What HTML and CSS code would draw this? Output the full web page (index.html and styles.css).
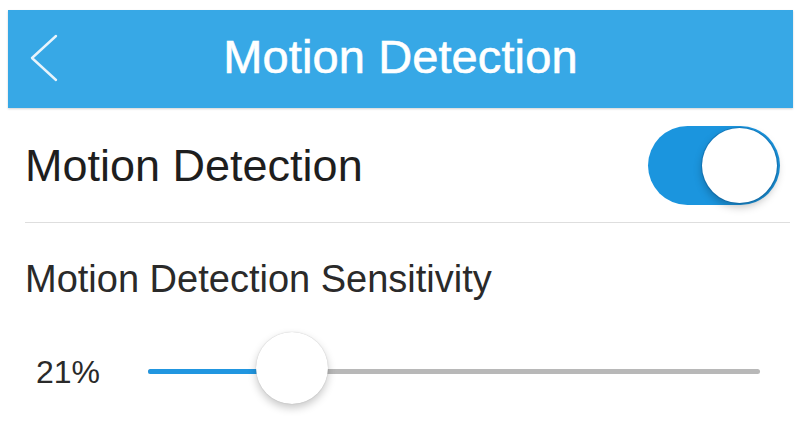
FILE: index.html
```html
<!DOCTYPE html>
<html lang="en">
<head>
  <meta charset="UTF-8" />
  <meta name="viewport" content="width=device-width, initial-scale=1.0"/>
  <title>Motion Detection</title>
  <link rel="stylesheet" href="styles.css">
</head>
<body>
  <div class="screen">
    <div class="navbar">
      <button class="back" aria-label="Back">
        <svg width="34" height="50" viewBox="0 0 34 50">
          <polyline points="30,3 6,25 30,47" fill="none" stroke="#e8f4fc" stroke-width="2.4" stroke-linecap="round" stroke-linejoin="round"/>
        </svg>
      </button>
      <h1>Motion Detection</h1>
      <span></span>
    </div>

    <div class="row switch-row">
      <span class="row-title">Motion Detection</span>
      <div class="toggle on"><div class="knob"></div></div>
    </div>

    <div class="section-label">Motion Detection Sensitivity</div>

    <div class="slider-row">
      <span class="value">21%</span>
      <div class="slider">
        <div class="track">
          <div class="fill" style="width: 23.5%"></div>
        </div>
        <div class="thumb" style="left: 23.5%"></div>
      </div>
    </div>
  </div>
</body>
</html>
```

FILE: styles.css
```css
    body {
      margin: 0;
      background: #fff;
      font-family: "Liberation Sans", Arial, sans-serif;
    }

    .screen {
      margin: 10px 7px 0 8px;
      padding-bottom: 34px;
    }

    .navbar {
      height: 98px;
      background: #37a8e6;
      display: grid;
      grid-template-columns: 1fr auto 1fr;
      align-items: center;
      box-shadow: 0 1px 2px rgba(0, 0, 0, 0.18);
    }

    .back {
      justify-self: start;
      background: none;
      border: none;
      padding: 0;
      margin: 0 0 2px 18px;
      display: flex;
    }

    h1 {
      margin: 0 0 4px;
      color: #fff;
      font-size: 47px;
      font-weight: normal;
      line-height: 54px;
      letter-spacing: 0.1px;
      -webkit-text-stroke: 0.6px #fff;
    }

    .row {
      display: flex;
      align-items: center;
      justify-content: space-between;
    }

    .switch-row {
      height: 114px;
      margin-left: 17px;
      margin-right: 3px;
      padding-right: 10px;
      border-bottom: 1px solid #dedede;
    }

    .row-title {
      font-size: 45px;
      line-height: 50px;
      color: #1e1e1e;
      margin-top: 2px;
    }

    .toggle {
      width: 132px;
      height: 79px;
      border-radius: 40px;
      background: #1b95de;
      display: flex;
      align-items: center;
      justify-content: flex-end;
      padding: 0 3px;
      box-sizing: border-box;
    }

    .knob {
      width: 75px;
      height: 75px;
      border-radius: 50%;
      background: #fff;
      box-shadow: 0 0 0 1px rgba(10, 80, 140, 0.35), 0 4px 8px rgba(0, 0, 0, 0.25);
    }

    .section-label {
      padding: 34px 0 0 17px;
      font-size: 38px;
      line-height: 44px;
      color: #2a2a2a;
    }

    .slider-row {
      display: flex;
      align-items: center;
      height: 72px;
      margin-top: 31px;
      padding: 0 33px 0 28px;
    }

    .value {
      width: 112px;
      flex-shrink: 0;
      font-size: 32px;
      line-height: 36px;
      color: #2a2a2a;
      padding-top: 8px;
    }

    .slider {
      position: relative;
      flex: 1;
      height: 72px;
      display: flex;
      align-items: center;
    }

    .track {
      width: 100%;
      height: 5px;
      margin-top: 6px;
      border-radius: 3px;
      background: #b8b8b8;
      overflow: hidden;
    }

    .fill {
      height: 100%;
      background: #2196e0;
    }

    .thumb {
      position: absolute;
      top: 0;
      width: 72px;
      height: 72px;
      margin-left: -36px;
      border-radius: 50%;
      background: #fff;
      box-shadow: 0 0 1px rgba(0, 0, 0, 0.25), 0 4px 9px rgba(0, 0, 0, 0.22);
    }
```
